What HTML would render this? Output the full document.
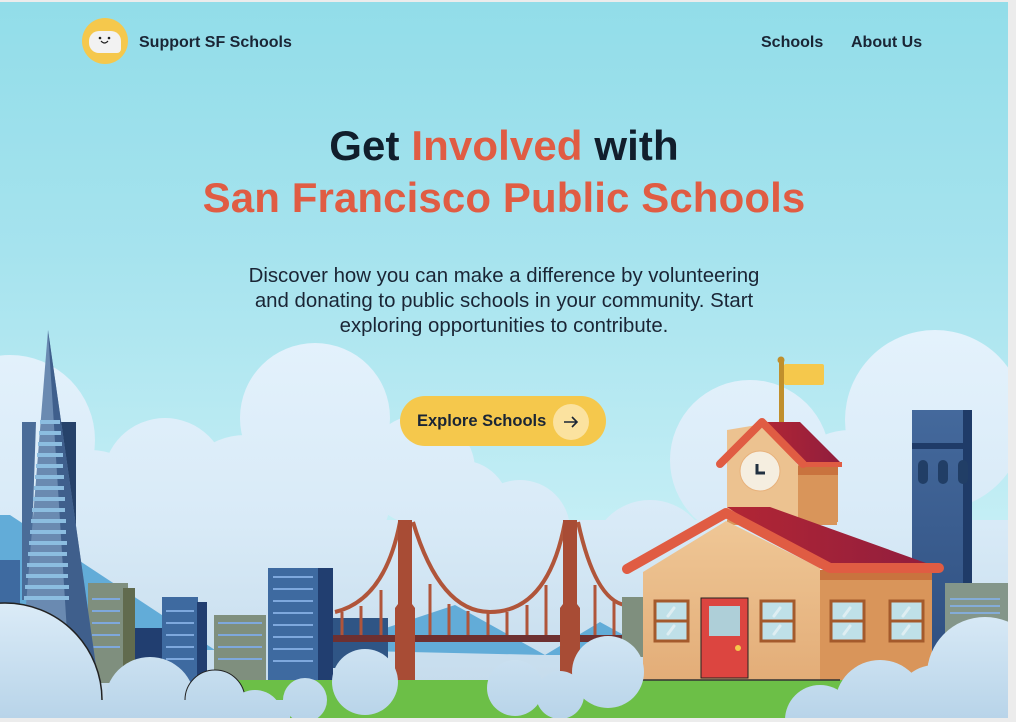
<!DOCTYPE html>
<html><head><meta charset="utf-8"><style>
html,body{margin:0;padding:0;width:1016px;height:722px;overflow:hidden;background:#ececec;font-family:"Liberation Sans",sans-serif;}
#pg{position:absolute;left:0;top:2px;width:1008px;height:716px;overflow:hidden;background:linear-gradient(#92dde9 0px,#a6e3ee 250px,#c4eef5 520px);}
svg{position:absolute;left:0;top:0}
.nav{position:absolute;top:0;left:0;width:1008px;height:80px;color:#1a2535;font-size:16px;font-weight:bold}
.h{position:absolute;left:0;width:1008px;text-align:center;font-weight:bold;font-size:42px;letter-spacing:0.1px;color:#111e2c}
.o{color:#e05c43}
.p{position:absolute;left:0;top:262px;width:1008px;text-align:center;font-size:20.4px;line-height:25px;color:#1a2535}
.btn{position:absolute;left:400px;top:394px;width:206px;height:50px;border-radius:25px;background:#f5c84c;}
</style></head><body><div id="pg">
<svg width="1008" height="716" viewBox="0 2 1008 716">
<defs>
<linearGradient id="cl" gradientUnits="userSpaceOnUse" x1="0" y1="330" x2="0" y2="718"><stop offset="0" stop-color="#e4f2fc"/><stop offset="0.5" stop-color="#d8eaf7"/><stop offset="1" stop-color="#c2d9ea"/></linearGradient>
<linearGradient id="fc" gradientUnits="userSpaceOnUse" x1="0" y1="600" x2="0" y2="718"><stop offset="0" stop-color="#dcecf8"/><stop offset="1" stop-color="#b8d4e9"/></linearGradient>
<linearGradient id="wall" x1="0" y1="0" x2="0" y2="1"><stop offset="0" stop-color="#efc796"/><stop offset="1" stop-color="#e3ad78"/></linearGradient>
<linearGradient id="roof" x1="0" y1="0" x2="1" y2="0"><stop offset="0" stop-color="#b22634"/><stop offset="1" stop-color="#8f1d3e"/></linearGradient>
<linearGradient id="tw" x1="0" y1="0" x2="0" y2="1"><stop offset="0" stop-color="#44699c"/><stop offset="1" stop-color="#2f4f80"/></linearGradient>
</defs>
<g fill="url(#cl)">
<circle cx="10" cy="440" r="85"/><circle cx="165" cy="480" r="62"/><circle cx="315" cy="418" r="75"/>
<circle cx="245" cy="505" r="70"/><circle cx="420" cy="470" r="55"/><circle cx="90" cy="520" r="70"/>
<circle cx="330" cy="500" r="60"/><circle cx="460" cy="510" r="50"/>
<circle cx="750" cy="460" r="80"/><circle cx="935" cy="420" r="90"/><circle cx="850" cy="500" r="70"/>
<circle cx="650" cy="560" r="60"/><circle cx="520" cy="530" r="50"/>
<rect x="0" y="520" width="1008" height="200"/>
</g>
<g fill="#62acd8">
<polygon points="0,515 10,515 215,650 0,650"/>
<polygon points="320,650 455,605 545,655"/>
<polygon points="545,655 600,622 660,655"/>
</g>
<rect x="0" y="560" width="20" height="120" fill="#3e6aa0"/>
<rect x="135" y="628" width="28" height="52" fill="#213e70"/>
<rect x="88" y="583" width="40" height="100" fill="#7f8f7e"/><rect x="123" y="588" width="12" height="95" fill="#616b4e"/>
<rect x="162" y="597" width="36" height="85" fill="#3e6aa0"/><rect x="197" y="602" width="10" height="80" fill="#213e70"/>
<rect x="214" y="615" width="52" height="68" fill="#7f8f7e"/>
<rect x="268" y="568" width="52" height="114" fill="#3e6aa0"/><rect x="318" y="568" width="15" height="114" fill="#213e70"/>
<g fill="#7ea8dd">
<rect x="273" y="576" width="40" height="2"/><rect x="273" y="588" width="40" height="2"/><rect x="273" y="600" width="40" height="2"/><rect x="273" y="612" width="40" height="2"/><rect x="273" y="624" width="40" height="2"/><rect x="273" y="636" width="40" height="2"/><rect x="273" y="648" width="40" height="2"/><rect x="273" y="660" width="40" height="2"/>
<rect x="166" y="610" width="28" height="2"/><rect x="166" y="622" width="28" height="2"/><rect x="166" y="634" width="28" height="2"/><rect x="166" y="646" width="28" height="2"/><rect x="166" y="658" width="28" height="2"/>
<rect x="218" y="622" width="44" height="2"/><rect x="218" y="634" width="44" height="2"/><rect x="218" y="646" width="44" height="2"/><rect x="218" y="658" width="44" height="2"/>
<rect x="92" y="598" width="28" height="2"/><rect x="92" y="610" width="28" height="2"/><rect x="92" y="622" width="28" height="2"/><rect x="92" y="634" width="28" height="2"/><rect x="92" y="646" width="28" height="2"/>
</g>
<polygon points="22,422 36,422 30,600 22,600" fill="#4a6c98"/>
<polygon points="60,422 76,422 76,560 66,560" fill="#26426a"/>
<polygon points="48,330 20,680 98,680" fill="#6a8ab1"/>
<polygon points="48,330 98,680 70,680" fill="#3f5f8c"/>
<g fill="#8cbde0">
<rect x="40" y="420" width="20" height="4"/><rect x="39" y="431" width="22" height="4"/><rect x="38" y="442" width="24" height="4"/><rect x="37" y="453" width="26" height="4"/><rect x="36" y="464" width="27" height="4"/><rect x="35" y="475" width="29" height="4"/><rect x="34" y="486" width="30" height="4"/><rect x="33" y="497" width="32" height="4"/><rect x="32" y="508" width="33" height="4"/><rect x="31" y="519" width="35" height="4"/><rect x="30" y="530" width="36" height="4"/><rect x="29" y="541" width="38" height="4"/><rect x="28" y="552" width="39" height="4"/><rect x="27" y="563" width="41" height="4"/><rect x="26" y="574" width="42" height="4"/><rect x="25" y="585" width="44" height="4"/><rect x="24" y="596" width="45" height="4"/>
</g>
<rect x="333" y="618" width="55" height="50" fill="#2f5585"/>
<g stroke="#b0553a" fill="none" stroke-width="4">
<path d="M335,612 Q385,600 400,522"/>
<path d="M413,522 Q440,612 490,612 Q548,612 565,522"/>
<path d="M578,522 Q595,600 625,605"/>
</g>
<g stroke="#b0553a" stroke-width="3">
<line x1="342" y1="612" x2="342" y2="636"/><line x1="361" y1="606" x2="361" y2="636"/><line x1="381" y1="590" x2="381" y2="636"/>
<line x1="430" y1="584" x2="430" y2="636"/><line x1="449" y1="604" x2="449" y2="636"/><line x1="468" y1="611" x2="468" y2="636"/><line x1="488" y1="613" x2="488" y2="636"/><line x1="507" y1="612" x2="507" y2="636"/><line x1="527" y1="605" x2="527" y2="636"/><line x1="546" y1="585" x2="546" y2="636"/>
<line x1="595" y1="585" x2="595" y2="636"/><line x1="614" y1="602" x2="614" y2="636"/>
</g>
<rect x="333" y="635" width="300" height="7" fill="#6e3030"/>
<path d="M398,520 h14 v84 l3,4 v72 h-20 v-72 l3,-4z" fill="#a84c35"/>
<path d="M563,520 h14 v84 l3,4 v72 h-20 v-72 l3,-4z" fill="#a84c35"/>
<rect x="622" y="597" width="22" height="60" fill="#7f8f7e"/>
<rect x="912" y="410" width="58" height="260" fill="url(#tw)"/><rect x="963" y="410" width="9" height="260" fill="#1f3b68"/>
<rect x="912" y="443" width="60" height="6" fill="#1f3b68"/>
<g fill="#213e66"><rect x="918" y="460" width="10" height="24" rx="5"/><rect x="938" y="460" width="10" height="24" rx="5"/><rect x="958" y="460" width="10" height="24" rx="5"/></g>
<rect x="945" y="583" width="63" height="80" fill="#84968a"/>
<g fill="#84acd8"><rect x="950" y="598" width="50" height="2"/><rect x="950" y="605" width="50" height="2"/><rect x="950" y="612" width="50" height="2"/></g>
<rect x="200" y="680" width="700" height="40" fill="#6cbf47"/>
<rect x="779" y="360" width="5" height="63" fill="#c08f2c"/><circle cx="781" cy="360" r="3.5" fill="#c08f2c"/>
<rect x="784" y="364" width="40" height="21" rx="2" fill="#f5c84c"/>
<rect x="727" y="465" width="110" height="60" fill="#d9955a"/>
<polygon points="727,430 763,424 798,465 798,520 727,520" fill="#ecc290"/>
<rect x="798" y="466" width="40" height="56" fill="#d9955a"/><rect x="798" y="466" width="40" height="9" fill="#c9733e"/>
<polygon points="762,422 800,422 842,464 800,464" fill="url(#roof)"/>
<path d="M720,464 L762,422 L803,464" stroke="#e05c43" stroke-width="8" fill="none" stroke-linecap="round" stroke-linejoin="round"/>
<rect x="800" y="462" width="42" height="5" fill="#e05c43"/>
<circle cx="760" cy="471" r="20" fill="#f5eee0" stroke="#e8b27c" stroke-width="1"/>
<path d="M757,464 v9 h8" stroke="#213040" stroke-width="3" fill="none"/>
<polygon points="727,507 770,507 940,568 820,568" fill="url(#roof)"/>
<rect x="820" y="570" width="112" height="110" fill="#d9955a"/><rect x="820" y="570" width="112" height="10" fill="#c9733e"/>
<polygon points="643,572 726,521 820,568 820,680 643,680" fill="url(#wall)"/>
<path d="M627,569 L726,513 L830,568 L939,568" stroke="#e05c43" stroke-width="10" fill="none" stroke-linecap="round" stroke-linejoin="round"/>
<g fill="#bfe0e8" stroke="#a45a2c" stroke-width="3">
<rect x="655" y="601" width="33" height="40"/><rect x="761" y="601" width="33" height="40"/><rect x="831" y="601" width="33" height="40"/><rect x="890" y="601" width="33" height="40"/>
</g>
<g stroke="#a45a2c" stroke-width="3"><line x1="655" y1="621" x2="688" y2="621"/><line x1="761" y1="621" x2="794" y2="621"/><line x1="831" y1="621" x2="864" y2="621"/><line x1="890" y1="621" x2="923" y2="621"/></g>
<g stroke="#e6f2f5" stroke-width="3" stroke-linecap="round" opacity=".8"><line x1="668" y1="616" x2="674" y2="608"/><line x1="668" y1="634" x2="674" y2="626"/><line x1="774" y1="616" x2="780" y2="608"/><line x1="774" y1="634" x2="780" y2="626"/><line x1="844" y1="616" x2="850" y2="608"/><line x1="844" y1="634" x2="850" y2="626"/><line x1="903" y1="616" x2="909" y2="608"/><line x1="903" y1="634" x2="909" y2="626"/></g>
<rect x="701" y="598" width="47" height="80" fill="#dc4540" stroke="#222" stroke-width="1"/>
<rect x="709" y="606" width="31" height="30" fill="#aecfd8"/>
<circle cx="738" cy="648" r="3" fill="#f5c84c"/>
<line x1="600" y1="680" x2="840" y2="680" stroke="#333" stroke-width="1.5"/>
<g fill="url(#fc)">
<circle cx="5" cy="700" r="97" stroke="#222" stroke-width="1.5"/>
<circle cx="150" cy="702" r="45"/><circle cx="215" cy="700" r="30" stroke="#222" stroke-width="1"/><circle cx="255" cy="718" r="28"/>
<circle cx="305" cy="700" r="22"/><circle cx="365" cy="682" r="33"/>
<circle cx="515" cy="688" r="28"/><circle cx="560" cy="695" r="24"/><circle cx="608" cy="672" r="36"/>
<circle cx="880" cy="705" r="45"/><circle cx="820" cy="720" r="35"/><circle cx="985" cy="675" r="58"/><circle cx="935" cy="705" r="40"/>
<rect x="0" y="700" width="290" height="20"/>
</g>
</svg>
<div class="nav">
<div style="position:absolute;left:82px;top:16px;width:46px;height:46px;border-radius:50%;background:#f5c84c"></div>
<div style="position:absolute;left:89px;top:29px;width:32px;height:22px;border-radius:10px 10px 4px 10px;background:#f2f2f2"></div>
<svg style="left:97px;top:34px" width="16" height="10"><circle cx="3" cy="2" r="1.3" fill="#222"/><circle cx="12" cy="2" r="1.3" fill="#222"/><path d="M4,5 Q7.5,9 11,5" stroke="#222" stroke-width="1.2" fill="none"/></svg>
<div style="position:absolute;left:139px;top:32px">Support SF Schools</div>
<div style="position:absolute;left:761px;top:32px">Schools</div>
<div style="position:absolute;left:851px;top:32px">About Us</div>
</div>
<div class="h" style="top:120px">Get <span class="o">Involved</span> with</div>
<div class="h o" style="top:172px">San Francisco Public Schools</div>
<div class="p">Discover how you can make a difference by volunteering<br>and donating to public schools in your community. Start<br>exploring opportunities to contribute.</div>
<div class="btn"><div style="position:absolute;left:17px;top:16px;font-size:16.5px;font-weight:bold;color:#1a2535">Explore Schools</div>
<div style="position:absolute;left:153px;top:8px;width:36px;height:36px;border-radius:50%;background:#fbe29f"></div>
<svg style="left:163px;top:18px" width="16" height="16"><path d="M1,8 H14 M9,3 L14,8 L9,13" stroke="#1a2535" stroke-width="1.6" fill="none"/></svg></div>
</div></body></html>
